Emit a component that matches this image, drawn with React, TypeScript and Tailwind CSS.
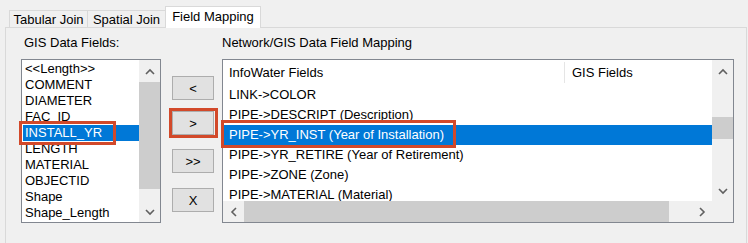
import React from "react";

function Chevron({ dir }: { dir: "up" | "down" | "left" | "right" }) {
  const vertical = dir === "up" || dir === "down";
  const d =
    dir === "up"
      ? "M1 6 L5 2 L9 6"
      : dir === "down"
      ? "M1 2 L5 6 L9 2"
      : dir === "left"
      ? "M6 1 L2 5 L6 9"
      : "M2 1 L6 5 L2 9";
  return (
    <svg
      width={vertical ? 10 : 8}
      height={vertical ? 8 : 10}
      viewBox={vertical ? "0 0 10 8" : "0 0 8 10"}
    >
      <path d={d} fill="none" stroke="#606060" strokeWidth="1.6" />
    </svg>
  );
}

const gisFields = [
  "<<Length>>",
  "COMMENT",
  "DIAMETER",
  "FAC_ID",
  "INSTALL_YR",
  "LENGTH",
  "MATERIAL",
  "OBJECTID",
  "Shape",
  "Shape_Length",
];

const mappings = [
  "LINK->COLOR",
  "PIPE->DESCRIPT (Description)",
  "PIPE->YR_INST (Year of Installation)",
  "PIPE->YR_RETIRE (Year of Retirement)",
  "PIPE->ZONE (Zone)",
  "PIPE->MATERIAL (Material)",
];

function WinButton({ label, className }: { label: string; className: string }) {
  return (
    <div
      className={`h-[24px] w-[42px] border border-[#adadad] bg-[#e1e1e1] flex items-center justify-center leading-none ${className}`}
    >
      {label}
    </div>
  );
}

export default function App() {
  return (
    <div className="relative w-[748px] h-[243px] overflow-hidden bg-[#f0f0f0] text-[13px] text-black font-['Liberation_Sans',Arial,sans-serif]">
      {/* Tabs */}
      <div className="flex items-end h-[27px] pl-[9px]">
        <div className="w-[79px] h-[17px] border-l border-t border-r border-[#d9d9d9] bg-[#f0f0f0] flex items-center justify-center leading-none pt-px">
          Tabular Join
        </div>
        <div className="w-[77px] h-[17px] border-t border-[#d9d9d9] bg-[#f0f0f0] flex items-center justify-center leading-none pt-px">
          Spatial Join
        </div>
        <div className="relative z-10 -mb-px w-[96px] h-[22px] border-l border-t border-r border-[#d9d9d9] bg-white flex items-center justify-center leading-none pb-[2px]">
          Field Mapping
        </div>
      </div>

      {/* Panel */}
      <div className="ml-[5px] w-[742px] h-[240px] border border-[#d9d9d9] bg-[#f0f0f0] flex pt-[7px] pl-[15px]">
        {/* Left column */}
        <div className="w-[140px] flex flex-col">
          <div className="h-[15px] leading-[15px] pl-[3px]">GIS Data Fields:</div>
          <div className="mt-[9px] w-[140px] h-[164px] border border-[#828790] bg-white flex">
            <div className="flex-1 pt-px">
              {gisFields.map((f, i) => (
                <div
                  key={f}
                  className={
                    i === 4
                      ? "h-[16px] leading-[16px] ml-px pl-[2px] bg-[#0078d7] text-white whitespace-nowrap"
                      : "h-[16px] leading-[16px] ml-px pl-[2px] whitespace-nowrap"
                  }
                >
                  {f}
                </div>
              ))}
            </div>
            <div className="w-[21px] bg-[#f0f0f0] flex flex-col">
              <div className="h-[21px] flex items-center justify-center pt-[2px]">
                <Chevron dir="up" />
              </div>
              <div className="mt-px h-[107px] bg-[#cdcdcd]" />
              <div className="flex-1" />
              <div className="h-[21px] flex items-center justify-center">
                <Chevron dir="down" />
              </div>
            </div>
          </div>
        </div>

        {/* Buttons */}
        <div className="ml-[11px] w-[42px] flex flex-col pt-[41px]">
          <WinButton label="<" className="" />
          <WinButton label=">" className="mt-[11px]" />
          <WinButton label=">>" className="mt-[14px]" />
          <WinButton label="X" className="mt-[15px]" />
        </div>

        {/* Right column */}
        <div className="ml-[8px] w-[512px] flex flex-col">
          <div className="h-[15px] leading-[15px]">Network/GIS Data Field Mapping</div>
          <div className="mt-[9px] w-[512px] h-[164px] border border-[#828790] bg-white flex flex-col">
            <div className="h-[141px] flex">
              <div className="w-[489px] h-[141px] overflow-hidden">
                <div className="h-[25px] flex items-center">
                  <div className="w-[341px] pl-[6px] leading-[25px]">InfoWater Fields</div>
                  <div className="w-px h-[21px] bg-[#e5e5e5]" />
                  <div className="pl-[7px] leading-[25px]">GIS Fields</div>
                </div>
                {mappings.map((m, i) => (
                  <div
                    key={m}
                    className={
                      i === 2
                        ? "h-[20px] leading-[20px] pl-[6px] bg-[#0078d7] text-white whitespace-nowrap"
                        : "h-[20px] leading-[20px] pl-[6px] whitespace-nowrap"
                    }
                  >
                    {m}
                  </div>
                ))}
              </div>
              <div className="w-[21px] bg-[#f0f0f0] flex flex-col">
                <div className="h-[21px] flex items-center justify-center pt-[2px]">
                  <Chevron dir="up" />
                </div>
                <div className="mt-[36px] h-[22px] bg-[#cdcdcd]" />
                <div className="flex-1" />
                <div className="h-[21px] flex items-center justify-center">
                  <Chevron dir="down" />
                </div>
              </div>
            </div>
            <div className="h-[21px] flex">
              <div className="w-[489px] bg-[#f0f0f0] flex">
                <div className="w-[21px] flex items-center justify-center">
                  <Chevron dir="left" />
                </div>
                <div className="w-[425px] bg-[#cdcdcd]" />
                <div className="flex-1" />
                <div className="w-[21px] flex items-center justify-center">
                  <Chevron dir="right" />
                </div>
              </div>
              <div className="w-[21px] bg-[#f0f0f0]" />
            </div>
          </div>
        </div>
      </div>

      {/* Red annotation boxes */}
      <div className="absolute left-[19px] top-[121px] w-[97px] h-[24px] border-[3px] border-[#d2492a] pointer-events-none" />
      <div className="absolute left-[169px] top-[108px] w-[49px] h-[30px] border-[3px] border-[#d2492a] pointer-events-none" />
      <div className="absolute left-[221px] top-[120px] w-[235px] h-[28px] border-[3px] border-[#d2492a] pointer-events-none" />
    </div>
  );
}
